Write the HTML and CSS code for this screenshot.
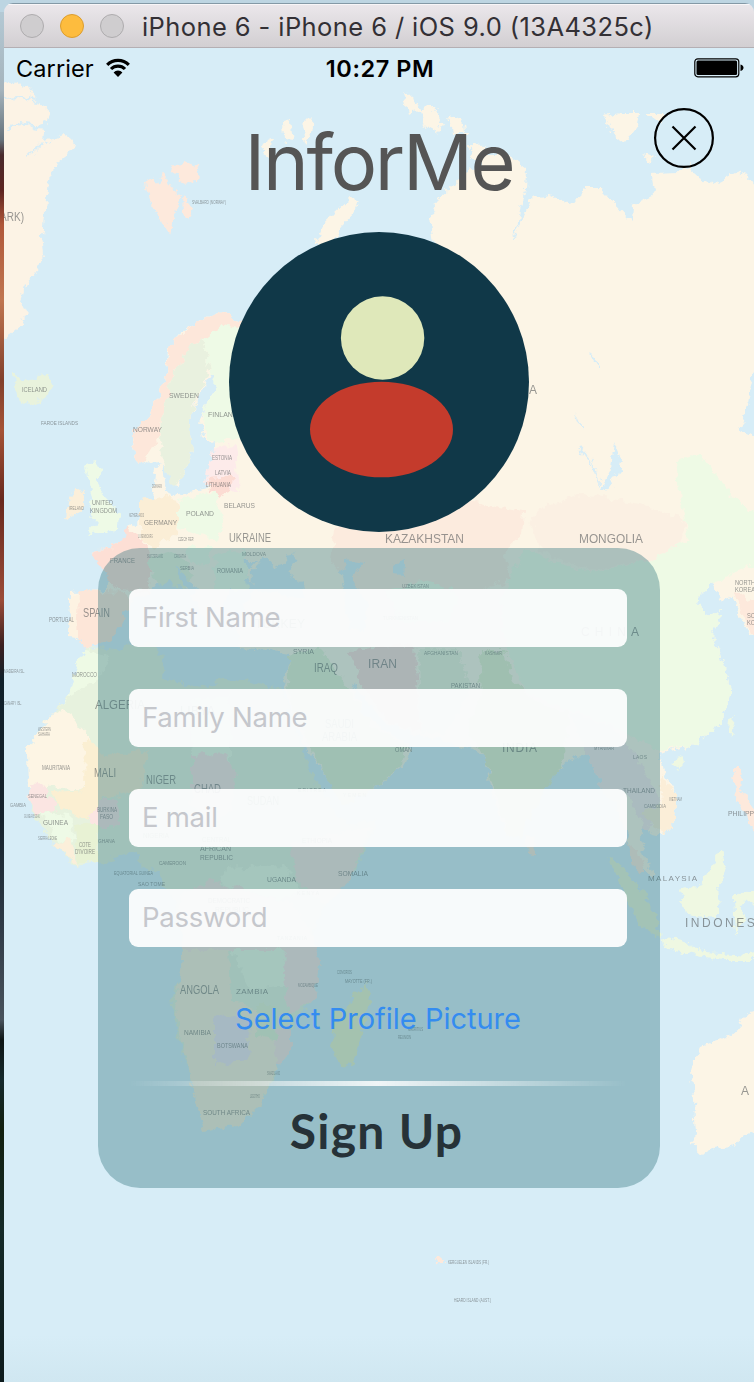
FILE: index.html
```html
<!DOCTYPE html>
<html lang="en">
<head>
<meta charset="utf-8">
<title>InforMe</title>
<link rel="stylesheet" href="styles.css">
</head>
<body>
<div class="desktop">
<div class="window">
  <header class="titlebar">
    <span class="light"></span><span class="light light-min"></span><span class="light"></span>
    <span class="window-title">iPhone 6 - iPhone 6 / iOS 9.0 (13A4325c)</span>
  </header>
  <main class="screen">
    <svg class="map" viewBox="4 48 750 1334" aria-hidden="true">
      <defs>
        <filter id="coast" x="0" y="0" width="100%" height="100%" color-interpolation-filters="sRGB">
          <feTurbulence type="fractalNoise" baseFrequency="0.12" numOctaves="4" seed="4"/>
          <feDisplacementMap in="SourceGraphic" scale="11" xChannelSelector="R" yChannelSelector="G"/>
        </filter>
        <linearGradient id="deep" x1="0" y1="0" x2="0" y2="1"><stop offset="0" stop-color="#d7edf7"/><stop offset="1" stop-color="#d0e7f1"/></linearGradient>
      </defs>
      <rect x="4" y="48" width="750" height="1334" fill="#d7edf7"/>
      <rect x="4" y="1335" width="750" height="47" fill="url(#deep)"/>
      <g filter="url(#coast)">
        <!-- Greenland and arctic islands -->
        <path fill="#fcf3e5" d="M-10 83L15 82 32 90 38 102 50 112 48 122 30 128 45 130 44 142 62 134 73 142 72 150 58 162 48 180 45 210 42 235 44 255 38 270 25 285 20 300 26 312 22 325 4 340-10 345Z"/>
        <path fill="none" stroke="#d7edf7" stroke-width="2" d="M4 98L20 97 37 100M6 129L18 124 42 127M27 157L42 143"/>
        <path fill="#fde9dc" d="M146 181L154 176 159 186 164 174 171 188 181 196 174 214 170 234 162 221 151 203ZM170 166L186 162 198 167 196 182 183 184ZM183 196L193 208 190 219 184 213Z"/>
        <path fill="#fcf5e6" d="M283 123L290 121 293 140 284 138ZM302 126L313 115 311 134 305 142ZM261 144L272 140 268 158ZM404 90L413 98 421 110 409 113ZM420 107L433 106 443 124 438 132 422 124ZM449 115L465 122 466 134 451 133ZM605 116L620 113 640 113 638 127 624 143 610 132ZM645 113L665 113 660 124ZM641 154L654 157 650 162ZM470 144L485 145 480 160 471 160Z"/>
        <path fill="#fcf5e6" d="M350 198L358 202 354 213 342 226 331 245 315 243 324 224 335 212Z"/>
        <!-- Eurasia -->
        <path fill="#fcf5e6" d="M434 245L430 217 438 200 455 184 466 172 480 168 484 153 505 153 515 160 526 169 525 190 519 214 517 229 526 211 532 198 550 195 565 202 580 200 583 187 600 187 612 201 632 222 633 205 650 198 655 190 652 173 680 172 690 165 697 177 712 184 735 172 748 176 756 190 765 190 765 364 754 372 748 402 741 430 754 436 765 440 765 640 750 635 738 616 733 597 721 600 712 584 697 600 704 615 724 612 712 636 722 655 731 690 722 722 695 744 672 751 660 756 663 774 677 796 676 820 662 836 650 833 646 823 640 840 655 880 643 868 632 850 624 826 612 790 600 786 587 752 568 760 550 780 539 800 520 836 508 838 496 810 485 758 470 748 430 738 390 726 365 700 352 682 354 690 366 718 386 730 408 744 412 752 402 768 370 792 342 806 332 786 306 748 288 700 285 680 290 653 270 650 240 648 238 620 255 590 246 573 258 560 232 560 226 600 210 630 203 620 190 590 160 580 150 592 132 600 118 625 108 642 88 648 83 640 70 636 70 592 105 590 117 568 90 552 118 546 130 528 148 512 154 492 156 474 152 468 162 466 165 490 175 495 208 488 214 455 214 443 204 438 200 425 204 409 216 390 228 380 210 375 195 405 188 420 192 450 183 478 176 490 164 468 152 460 142 464 134 455 133 438 136 430 152 415 166 375 168 350 180 334 200 320 220 312 242 322 265 320 310 310 360 270Z"/>
        <!-- Scandinavia -->
        <path fill="#fde7da" d="M142 464L134 455 133 430 152 415 166 375 170 345 196 322 220 312 242 322 240 345 203 340 190 346 173 375 163 410 160 435Z"/>
        <path fill="#e9f1df" d="M160 440L163 410 173 375 190 346 203 340 210 370 196 400 188 420 192 450 183 478 173 488 164 468Z"/>
        <path fill="#eefae6" d="M203 340L222 325 250 330 250 436 214 443 203 430 204 409 216 390 210 370Z"/>
        <path fill="#fdebea" d="M214 448L236 445 240 492 214 490 205 480Z"/>
        <path fill="#fcdcd3" d="M207 478L232 476 230 493 219 498 208 490Z"/>
        <!-- Central Europe -->
        <path fill="#fbeed6" d="M140 500L170 495 180 510 178 532 155 548 140 540Z"/>
        <path fill="#eefae6" d="M178 500L215 492 224 520 217 542 192 533 178 527Z"/>
        <path fill="#fddfd5" d="M90 552L118 546 128 528 142 540 152 560 148 592 118 590Z"/>
        <path fill="#fde6d8" d="M78 590L125 592 130 605 110 642 88 648 76 636Z"/>
        <path fill="#fdf3e2" d="M70 594L79 594 77 638 69 637Z"/>
        <path fill="#e9f3dd" d="M144 560L175 552 195 575 185 588 160 585Z"/>
        <path fill="#eefae6" d="M186 548L210 545 210 565 190 566ZM215 552L245 550 248 590 214 590Z"/>
        <path fill="#fcebde" d="M330 560L336 525 380 518 470 500 500 508 524 512 522 535 505 550 510 580 460 596 420 590 400 620 370 604Z"/>
        <path fill="#fbf0e3" d="M530 520L545 505 580 495 640 503 685 520 680 545 650 560 590 570 540 552Z"/>
        <path fill="#eefae5" d="M525 548L550 560 590 572 650 560 690 540 680 500 676 462 690 455 705 458 720 480 735 500 765 520 765 560 730 575 712 584 697 600 704 615 724 612 712 636 722 655 731 690 722 722 695 744 660 752 630 735 600 720 555 705 525 690 508 655 500 600Z"/>
        <path fill="#eefae5" d="M384 590L430 580 460 595 450 620 400 622Z"/>
        <path fill="#e5efcf" d="M480 650L505 650 512 680 540 705 570 712 562 765 539 800 520 836 508 838 485 758 468 730 482 695Z"/>
        <path fill="#ebf1db" d="M418 648L460 650 470 690 445 735 420 732Z"/>
        <path fill="#fadcd8" d="M350 650L415 645 420 732 392 726 362 685Z"/>
        <path fill="#e4f0d4" d="M288 655L320 648 350 690 370 725 408 746 400 768 370 792 342 806 310 748 290 700Z"/>
        <path fill="#f7e8e8" d="M570 712L610 725 640 760 660 800 648 832 638 815 625 790 618 810 600 786Z"/>
        <path fill="#fbeed8" d="M660 775L677 796 676 820 662 836 650 820 640 812 662 804Z"/>
        <!-- Black Sea, Caspian, lakes -->
        <path fill="#d7edf7" d="M251 590L252 571 265 556 275 568 285 562 293 552 297 560 288 572 304 584 306 598 275 592ZM340 570L350 560 364 562 354 580 367 605 365 630 350 628ZM157 588L172 580 182 610 200 640 180 640 160 610ZM174 567L184 574 198 592 190 594ZM394 565L405 561 403 575 394 574ZM614 442L621 460 617 475 606 491 601 489 611 470Z"/>
        <!-- Africa -->
        <path fill="#e7f2de" d="M87 648L110 650 150 642 163 655 162 678 195 686 210 688 220 678 250 682 283 690 292 720 310 770 330 805 345 825 378 820 372 835 350 880 325 905 312 935 320 965 315 1000 298 1015 288 1035 290 1055 277 1065 275 1077 262 1103 240 1125 205 1131 202 1112 193 1090 185 1060 175 1020 171 1000 180 975 183 945 178 920 172 890 163 885 160 870 142 868 138 853 125 855 100 862 75 865 52 842 38 820 27 800 30 785 27 750 40 730 55 710 72 690Z"/>
        <path fill="#eefae5" d="M86 650L110 655 98 680 68 696 58 708 66 700 80 660ZM225 868L285 865 300 890 260 910 220 895ZM230 945L285 945 285 985 250 990ZM190 700L230 695 230 790 192 760Z"/>
        <path fill="#fdf5e4" d="M55 710L70 715 88 735 85 790 40 786 28 790 27 750 40 730Z"/>
        <path fill="#fbe5e2" d="M30 784L45 786 58 812 38 814 27 800ZM85 815L98 800 120 800 118 825 95 828ZM192 755L225 752 235 775 232 810 205 830 192 805ZM285 940L315 935 320 965 315 1000 290 1014 284 980ZM272 1035L290 1025 290 1055 277 1065 272 1077Z"/>
        <path fill="#fbefd2" d="M85 735L105 755 150 750 140 790 100 800 85 820 56 805 52 792 84 790Z"/>
        <path fill="#eefae6" d="M40 813L70 815 75 840 58 842Z"/>
        <path fill="#e8f2d4" d="M75 825L98 822 98 862 78 862Z"/>
        <path fill="#fbefda" d="M55 845L70 838 78 865ZM182 950L228 945 230 1000 270 1015 278 1065 262 1103 240 1125 205 1131 193 1090 175 1010Z"/>
        <path fill="#f8e6df" d="M290 845L330 835 372 825 350 880 325 905 300 885ZM180 895L210 880 295 905 312 935 285 950 183 950Z"/>
        <path fill="#f0e5ee" d="M215 1015L250 1018 248 1060 215 1065Z"/>
        <path fill="#e6f2d5" d="M256 1005L275 1005 278 1040 255 1035Z"/>
        <path fill="#edf3ce" d="M367 982L371 995 360 1040 352 1064 342 1068 332 1052 333 1018 348 1003Z"/>
        <!-- Atlantic islands -->
        <path fill="#e9f3dd" d="M14 374L25 379 48 373 53 385 45 398 30 405 16 397Z"/>
        <path fill="#eefae6" d="M85 462L96 460 102 475 97 485 110 503 120 515 117 530 87 535 98 523 90 514 92 497Z"/>
        <path fill="#fbefda" d="M76 488L86 493 82 512 66 520 68 502Z"/>
        <!-- South-east Asia -->
        <path fill="#ebf6d9" d="M608 857L625 870 645 895 658 920 660 938 640 925Z"/>
        <path fill="#eff8e2" d="M720 850L727 867 718 885 720 910 715 918 685 915 680 890 700 885ZM733 895L765 890 765 900 738 904 745 915 735 933ZM662 937L685 942 705 952 750 955 765 952 765 960 720 960 665 948ZM672 762L683 756 684 764 678 770ZM729 720L735 716 732 738 728 732Z"/>
        <path fill="#fde9dc" d="M733 768L742 768 740 790 748 800 765 820 765 845 750 825 738 802ZM524 833L536 836 534 855 527 854ZM626 840L638 850 645 875 632 865Z"/>
        <path fill="#fde9dc" d="M735 590L748 600 765 610 765 635 752 635 742 615Z"/>
        <!-- Australia -->
        <path fill="#fcf5e6" d="M765 1010L749 1013 744 1018 740 1028 735 1034 714 1041 700 1047 696 1055 692 1072 694 1100 696 1135 690 1144 702 1155 715 1148 733 1146 745 1135 765 1128Z"/>
        <path fill="#fde9dc" d="M435 1259L444 1258 444 1265 436 1263Z"/>
        <!-- Siberian rivers -->
        <path fill="none" stroke="#d7edf7" stroke-width="1.500" d="M575 415L582 430M578 445L590 460 600 485M590 352L600 368M517 228L512 240"/>
      </g>
      <!-- Country labels -->
      <g class="labels">
        <g class="label-lg">
          <text x="0" y="221" textLength="24">ARK)</text><text x="229" y="542" textLength="42">UKRAINE</text><text x="385" y="543" textLength="79">KAZAKHSTAN</text><text x="579" y="543" textLength="64">MONGOLIA</text><text x="529" y="394">A</text>
          <text x="83" y="617" textLength="27">SPAIN</text><text x="95" y="709" textLength="50">ALGERIA</text><text x="94" y="777" textLength="22">MALI</text><text x="146" y="784" textLength="30">NIGER</text><text x="314" y="672" textLength="24">IRAQ</text><text x="368" y="668" textLength="29">IRAN</text><text x="581" y="636" textLength="58">CHINA</text><text x="502" y="752" textLength="35">INDIA</text><text x="180" y="994" textLength="39">ANGOLA</text><text x="685" y="927" textLength="86">INDONESIA</text><text x="741" y="1095">A</text><text x="194" y="793" textLength="27">CHAD</text><text x="247" y="805" textLength="32">SUDAN</text><text x="255" y="628" textLength="50">TURKEY</text><text x="325" y="728" textLength="29">SAUDI</text><text x="322" y="741" textLength="35">ARABIA</text><text x="180" y="715" textLength="35">LIBYA</text>
        </g>
        <g class="label-md">
          <text x="22" y="392" textLength="25">ICELAND</text><text x="169" y="398" textLength="30">SWEDEN</text><text x="133" y="432" textLength="29">NORWAY</text><text x="208" y="417" textLength="30">FINLAND</text><text x="92" y="505" textLength="21">UNITED</text><text x="90" y="513" textLength="27">KINGDOM</text><text x="144" y="525" textLength="33">GERMANY</text><text x="186" y="516" textLength="28">POLAND</text><text x="224" y="508" textLength="31">BELARUS</text><text x="110" y="563" textLength="25">FRANCE</text><text x="72" y="677" textLength="25">MOROCCO</text><text x="42" y="770" textLength="28">MAURITANIA</text><text x="43" y="825" textLength="25">GUINEA</text><text x="200" y="851" textLength="31">AFRICAN</text><text x="200" y="860" textLength="33">REPUBLIC</text><text x="202" y="842" textLength="29">CENTRAL</text><text x="267" y="882" textLength="29">UGANDA</text><text x="338" y="876" textLength="30">SOMALIA</text><text x="236" y="994" textLength="32">ZAMBIA</text><text x="184" y="1035" textLength="27">NAMIBIA</text><text x="217" y="1048" textLength="31">BOTSWANA</text><text x="203" y="1115" textLength="47">SOUTH AFRICA</text><text x="293" y="654" textLength="21">SYRIA</text><text x="451" y="688" textLength="29">PAKISTAN</text><text x="623" y="793" textLength="32">THAILAND</text><text x="648" y="881" textLength="49">MALAYSIA</text><text x="728" y="816" textLength="42">PHILIPPINES</text><text x="735" y="585" textLength="20">NORTH</text><text x="735" y="592" textLength="20">KOREA</text><text x="747" y="618" textLength="20">SOUTH</text><text x="747" y="625" textLength="20">KOREA</text><text x="208" y="903" textLength="42">DEMOCRATIC</text><text x="215" y="912" textLength="34">REPUBLIC</text><text x="217" y="573" textLength="26">ROMANIA</text><text x="49" y="622" textLength="25">PORTUGAL</text><text x="395" y="752" textLength="17">OMAN</text><text x="79" y="847" textLength="12">COTE</text><text x="75" y="854" textLength="20">D'IVOIRE</text><text x="143" y="838" textLength="26">NIGERIA</text><text x="302" y="843" textLength="30">ETHIOPIA</text><text x="97" y="812" textLength="20">BURKINA</text><text x="100" y="819" textLength="13">FASO</text><text x="212" y="460" textLength="20">ESTONIA</text><text x="215" y="475" textLength="16">LATVIA</text><text x="206" y="487" textLength="25">LITHUANIA</text>
        </g>
        <g class="label-sm">
          <text x="192" y="204" textLength="34">SVALBARD (NORWAY)</text><text x="41" y="425" textLength="37">FAROE ISLANDS</text><text x="242" y="556" textLength="24">MOLDOVA</text><text x="69" y="510" textLength="15">IRELAND</text><text x="152" y="488" textLength="10">DENMARK</text><text x="129" y="517" textLength="15">NETHERLANDS</text><text x="138" y="538" textLength="15">LUXEMBOURG</text><text x="178" y="541" textLength="16">CZECH REP.</text><text x="147" y="558" textLength="16">SWITZERLAND</text><text x="174" y="558" textLength="12">CROATIA</text><text x="180" y="570" textLength="14">SERBIA</text><text x="402" y="588" textLength="27">UZBEKISTAN</text><text x="383" y="620" textLength="35">TURKMENISTAN</text><text x="424" y="655" textLength="34">AFGHANISTAN</text><text x="485" y="655" textLength="17">KASHMIR</text><text x="4" y="673" textLength="21">MADEIRA ISL.</text><text x="4" y="705" textLength="18">CANARY ISL.</text><text x="28" y="798" textLength="19">SENEGAL</text><text x="10" y="807" textLength="16">GAMBIA</text><text x="24" y="818" textLength="16">GUINEA-BISSAU</text><text x="38" y="840" textLength="19">SIERRA LEONE</text><text x="98" y="843" textLength="17">GHANA</text><text x="159" y="865" textLength="27">CAMEROON</text><text x="114" y="875" textLength="39">EQUATORIAL GUINEA</text><text x="138" y="886" textLength="27">SAO TOME</text><text x="277" y="940" textLength="30">TANZANIA</text><text x="298" y="987" textLength="20">MOZAMBIQUE</text><text x="337" y="974" textLength="15">COMOROS</text><text x="345" y="983" textLength="27">MAYOTTE (FR.)</text><text x="408" y="1031" textLength="15">MAURITIUS</text><text x="398" y="1039" textLength="13">REUNION</text><text x="267" y="1075" textLength="13">SWAZILAND</text><text x="250" y="1098" textLength="10">LESOTHO</text><text x="633" y="759" textLength="14">LAOS</text><text x="594" y="750" textLength="20">MYANMAR</text><text x="298" y="792" textLength="28">ERITREA</text><text x="343" y="797" textLength="23">YEMEN</text><text x="644" y="808" textLength="22">CAMBODIA</text><text x="669" y="801" textLength="13">VIETNAM</text><text x="297" y="895" textLength="22">KENYA</text><text x="38" y="731" textLength="13">WESTERN</text><text x="38" y="736" textLength="12">SAHARA</text><text x="448" y="1264" textLength="41">KERGUELEN ISLANDS (FR.)</text><text x="454" y="1302" textLength="37">HEARD ISLAND (AUST.)</text>
        </g>
      </g>
    </svg>
    <div class="content">
      <div class="status">
        <div class="carrier"><span>Carrier</span>
          <svg class="wifi" width="26" height="20" viewBox="0 0 26 20"><path d="M2.2 6.8a15.3 15.3 0 0 1 21.6 0M6 11a9.8 9.8 0 0 1 14 0" fill="none" stroke="#000" stroke-width="3.200"/><path d="M8.600 14.500a6 6 0 0 1 8.800 0L13 19z"/></svg>
        </div>
        <div class="time">10:27 PM</div>
        <svg class="battery" width="50" height="20" viewBox="0 0 50 20"><rect x=".8" y=".8" width="44" height="18" rx="3" fill="none" stroke="#000" stroke-width="1.2"/><rect x="2.5" y="2.5" width="40.6" height="14.6" rx="1.5"/><path d="M46.5 6.5c4 1 4 5.500 0 6.500z"/></svg>
      </div>
      <div class="head">
        <h1>InforMe</h1>
        <button class="close" aria-label="Close"><svg width="62" height="62" viewBox="0 0 62 62"><g fill="none" stroke="#000" stroke-width="2.2"><circle cx="31" cy="31" r="28.900"/><path d="M19.500 19.500l23 23M42.500 19.500l-23 23"/></g></svg></button>
      </div>
      <svg class="avatar" width="300" height="300" viewBox="0 0 300 300"><circle cx="150" cy="150" r="150" fill="#103848"/><circle cx="153.600" cy="106" r="41.700" fill="#dfe8ba"/><ellipse cx="152.500" cy="197.500" rx="71.500" ry="47.800" fill="#c43b2c"/></svg>
      <form class="panel">
        <label class="field">First Name</label>
        <label class="field">Family Name</label>
        <label class="field">E mail</label>
        <label class="field">Password</label>
        <a class="picture">Select Profile Picture</a>
        <div class="divider"></div>
        <div class="signup">Sign Up</div>
      </form>
    </div>
  </main>
</div>
</div>
<script src="labels.js"></script>
</body>
</html>
```
FILE: labels.js
```js
// Condense the glyphs of map labels that are wider than their slot.
document.querySelectorAll('.labels text[textLength]').forEach(function (label) {
  var slot = label.getAttribute('textLength');
  label.removeAttribute('textLength');
  var natural = label.getComputedTextLength();
  if (natural > Number(slot)) label.setAttribute('lengthAdjust', 'spacingAndGlyphs');
  label.setAttribute('textLength', slot);
});
```
FILE: styles.css
```css
* { box-sizing: border-box; }
body { margin: 0; font-family: Inter, "Liberation Sans", sans-serif; }
.desktop {
  width: 754px; height: 1382px; padding: 3px 0 0 4px; overflow: hidden;
  background:
    linear-gradient(#bdd5e2, #bdd5e2) 0 0 / 100% 12px no-repeat,
    linear-gradient(#b6ccd8 0, #a5b4bc 90px, #65717a 140px, #4a2a2c 155px, #5c2420 190px, #b0583a 225px, #c07650 300px, #81402c 380px, #a55336 430px, #68291e 500px, #9b4c38 600px, #3c2020 645px, #10202a 680px, #17242e 820px, #303c48 930px, #49535c 1020px, #0e1515 1040px, #15292c 1080px, #12200f 1130px, #142a28 1230px, #0d1a1c 1382px);
}
.window { display: flex; flex-direction: column; height: 1379px; border-radius: 9px 9px 0 0; overflow: hidden; }
.titlebar {
  display: flex; align-items: center; flex: none; height: 45px; padding-left: 16px; gap: 16px;
  background: linear-gradient(#ebe7eb, #d2cfd2); border-top: 1px solid #8499a6; border-bottom: 1px solid #b4afb3;
  box-shadow: inset 0 1px #f8f6f8;
}
.light { width: 24px; height: 24px; border-radius: 50%; background: #cfcdcf; border: 1px solid #aeacae; }
.light-min { background: #fdbc3e; border-color: #dc9d2e; }
.window-title { margin-left: 2px; padding-top: 1px; font-size: 25.500px; color: #333035; white-space: nowrap; letter-spacing: .41px; }
.screen { position: relative; flex: 1; }
.map { position: absolute; left: 0; top: 0; width: 750px; height: 1334px; }
.labels { fill: #55585a; font-family: "Liberation Sans", sans-serif; }
.label-lg { font-size: 12px; opacity: .6; }
.label-md { font-size: 8px; opacity: .62; }
.label-sm { font-size: 5px; opacity: .6; }
.content { position: relative; display: flex; flex-direction: column; align-items: center; }
.status { display: grid; grid-template-columns: 1fr auto 1fr; align-items: center; width: 100%; height: 42px; padding: 0 10px 2px 12px; font-size: 23.500px; }
.carrier { display: flex; align-items: center; gap: 11px; letter-spacing: .1px; }
.time { font-weight: 600; letter-spacing: .55px; }
.battery { justify-self: end; }
.head { display: grid; grid-template-columns: 1fr auto 1fr; width: 100%; height: 142px; padding: 17px 39px 0; }
h1 { grid-column: 2; margin: 7px 0 0; font-size: 77.500px; line-height: 96px; font-weight: 400; letter-spacing: -2.300px; color: #555; }
.close { justify-self: end; width: 62px; height: 62px; padding: 0; border: 0; background: none; }
.avatar { display: block; }
.panel { display: flex; flex-direction: column; width: 562px; height: 640px; margin-top: 16px; padding: 41px 33px 0 31px; border-radius: 42px; background: rgba(55, 120, 130, .4); }
.field { display: flex; align-items: center; flex: none; height: 58px; margin-bottom: 42px; padding: 0 0 2px 13px; border-radius: 9px; background: rgba(255, 255, 255, .92); font-size: 27.500px; letter-spacing: -.25px; color: #c5c7cc; }
.picture { align-self: center; margin-top: 11px; font-size: 29px; line-height: 38px; color: #348cf0; white-space: nowrap; }
.divider { flex: none; height: 5px; margin-top: 43px; background: linear-gradient(90deg, transparent, rgba(255, 255, 255, .85) 50%, transparent); border-block: 1px solid transparent; }
.signup { align-self: center; margin-top: 17px; margin-right: 3px; font: 700 48px/56px Lato, sans-serif; letter-spacing: 1.300px; white-space: nowrap; color: #263238; }
```
